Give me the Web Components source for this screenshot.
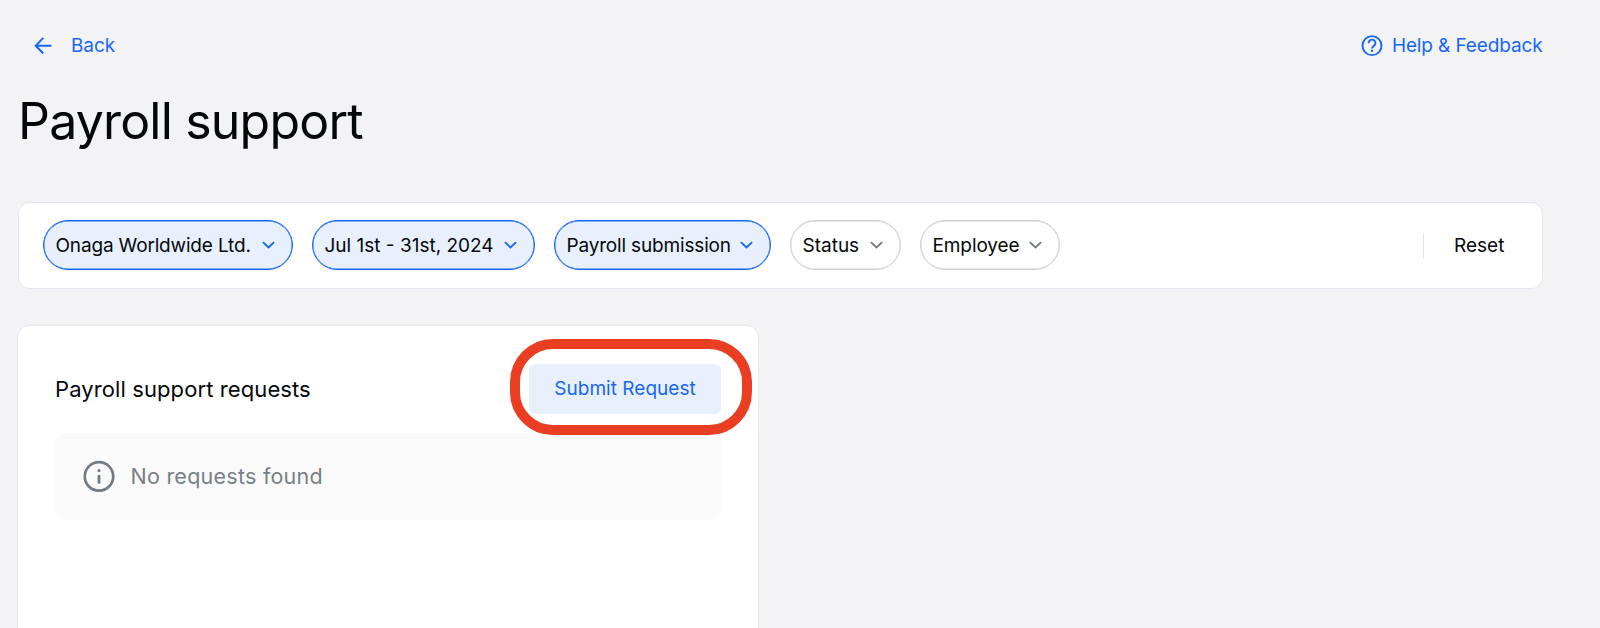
<!DOCTYPE html>
<html lang="en">
<head>
<meta charset="utf-8">
<title>Payroll support</title>
<style>
html,body{margin:0;height:100%}
body{background:#f3f3f6;font-family:Inter,"Liberation Sans",sans-serif;overflow:hidden;color:#05080b}
</style>
</head>
<body>
<payroll-page></payroll-page>
<script>
const define=(name,css,html)=>customElements.define(name,class extends HTMLElement{
  constructor(){
    super();
    const t=document.createElement('template');
    t.innerHTML=`<style>:host{box-sizing:border-box}*{box-sizing:border-box}svg{display:block;flex:none}${css}</style>${html}`;
    this.attachShadow({mode:'open'}).append(t.content.cloneNode(true));
  }
});

define('nav-link',
`:host{display:flex;align-items:center;color:#1767f2;font-size:19px;line-height:26px;white-space:nowrap}`,
`<slot name="icon"></slot><span><slot></slot></span>`);

define('filter-chip',
`:host{display:flex;align-items:center;justify-content:space-between;height:50px;padding:0 17px 0 11.5px;border:1px solid var(--edge);box-shadow:inset 0 0 0 .4px var(--edge);border-radius:25px;background:#fff;font-size:19px;letter-spacing:-.17px;white-space:nowrap;--arrow:#737a80;--edge:#d0d1d3}
:host([active]){--edge:#1767f2;background:#e8f0fe;--arrow:#1767f2}
svg{stroke:var(--arrow)}`,
`<span><slot></slot></span><svg width="13" height="8" viewBox="0 0 13 8" fill="none" stroke-width="1.9"><path d="M.9 1.100 6.500 6.500l5.600-5.400"/></svg>`);

define('filter-bar',
`:host{display:flex;align-items:center;height:87px;padding:0 37px 1px 24px;background:#fff;border:1px solid #e2e6f1;border-radius:12px}
.chips{display:flex;gap:19px;flex:1}
.line{width:1px;height:25px;background:#dfe4ef;margin-right:30px}
.reset{font-size:19px;width:51px;white-space:nowrap}`,
`<div class="chips"><slot></slot></div><div class="line"></div><div class="reset"><slot name="action"></slot></div>`);

define('submit-button',
`:host{display:flex;align-items:center;justify-content:center;position:relative;width:192px;height:50px;padding-bottom:1px;border-radius:6px;background:#e8f0fe;color:#1767f2;font-size:19px;letter-spacing:.03px;white-space:nowrap}
.ring{position:absolute;left:-19px;top:-25px;width:242px;height:96px;border:10px solid #ea3e23;border-radius:43px}`,
`<span><slot></slot></span><div class="ring"></div>`);

define('empty-notice',
`:host{display:flex;align-items:center;height:87px;padding:0 0 1px 28px;gap:15.500px;border-radius:10px;background:#fafafa;color:#788086;font-size:21.500px;letter-spacing:.25px;white-space:nowrap}`,
`<svg width="32" height="32" viewBox="0 0 32 32"><circle cx="16" cy="16.400" r="14.200" fill="none" stroke="#737b82" stroke-width="2.700"/><circle cx="16" cy="10.600" r="1.600" fill="#737b82"/><path d="M16 16.200v6.400" stroke="#737b82" stroke-width="2.800" stroke-linecap="round"/></svg><span><slot></slot></span>`);

define('request-card',
`:host{display:block;width:742px;height:320px;padding:38px 37px 0;background:#fff;border:1px solid #e4e7f1;border-radius:12px}
.head{display:flex;align-items:center;justify-content:space-between;height:50px;margin-bottom:19px}
h2{margin:0;font-size:22px;font-weight:400;letter-spacing:.1px;white-space:nowrap}`,
`<div class="head"><h2><slot name="title"></slot></h2><slot name="action"></slot></div><slot></slot>`);

define('payroll-page',
`:host{display:block;height:628px;padding:32px 57px 0 17px;overflow:hidden}
.top{display:flex;justify-content:space-between;height:27px}
nav-link{height:27px;line-height:27px}
.back{padding-left:17px;letter-spacing:-.1px}
.back svg{margin-right:19px}
.help{letter-spacing:-.12px;padding-right:.5px}
.help svg{margin-right:8.500px}
h1{margin:31px 0 0 1px;font-size:50px;line-height:62px;font-weight:400;letter-spacing:-.8px;white-space:nowrap;height:62px}
filter-bar{margin:50px 0 36px 1px}`,
`<div class="top">
<nav-link class="back"><svg slot="icon" width="18" height="18" viewBox="0 0 18 18" fill="none" stroke="#1767f2" stroke-width="2"><path d="M17.500 8.700H2M9.300.9 1.700 8.700l7.600 7.800"/></svg>Back</nav-link>
<nav-link class="help"><svg slot="icon" width="22" height="22" viewBox="0 0 22 22" fill="none" stroke="#1767f2" stroke-width="1.900"><circle cx="11" cy="10.600" r="9.500"/><path d="M7.600 8.300a3.400 3.400 0 1 1 5.400 2.500c-1.200.8-2 1.300-2 2.700"/><circle cx="11" cy="15.800" r="1.200" fill="#1767f2" stroke="none"/></svg>Help &amp; Feedback</nav-link>
</div>
<h1>Payroll support</h1>
<filter-bar>
<filter-chip active style="width:250px">Onaga Worldwide Ltd.</filter-chip>
<filter-chip active style="width:223px;letter-spacing:0">Jul 1st - 31st, 2024</filter-chip>
<filter-chip active style="width:217px">Payroll submission</filter-chip>
<filter-chip style="width:111px;letter-spacing:0">Status</filter-chip>
<filter-chip style="width:140px;letter-spacing:-.1px">Employee</filter-chip>
<span slot="action">Reset</span>
</filter-bar>
<request-card>
<span slot="title">Payroll support requests</span>
<submit-button slot="action">Submit Request</submit-button>
<empty-notice>No requests found</empty-notice>
</request-card>`);
</script>
</body>
</html>
